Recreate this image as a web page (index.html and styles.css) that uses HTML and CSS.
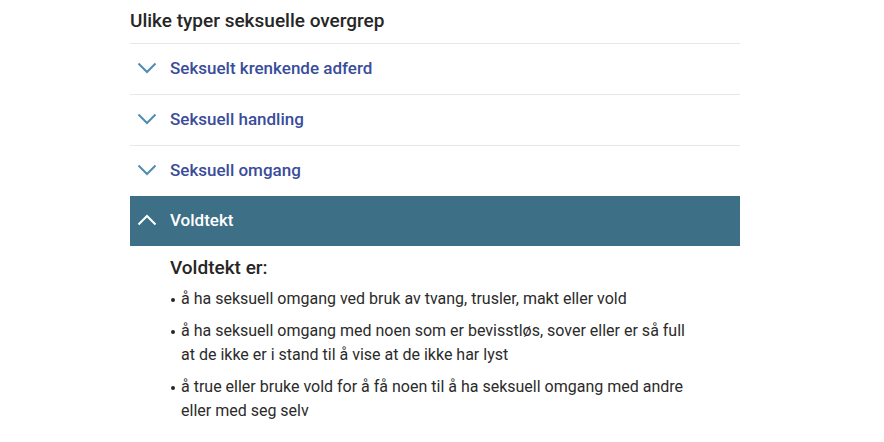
FILE: index.html
```html
<!DOCTYPE html>
<html lang="no">
<head>
  <meta charset="UTF-8" />
  <title>Ulike typer seksuelle overgrep</title>
  <link rel="stylesheet" href="styles.css">
</head>
<body>
  <section class="types">
    <h2>Ulike typer seksuelle overgrep</h2>
    <ul class="accordion">
      <li class="item">
        <button class="toggle">
          <svg class="chevron" viewBox="0 0 20 12" width="20" height="12"><path d="M1.5 1.5 L10 10 L18.5 1.5" /></svg>
          <span>Seksuelt krenkende adferd</span>
        </button>
      </li>
      <li class="item">
        <button class="toggle">
          <svg class="chevron" viewBox="0 0 20 12" width="20" height="12"><path d="M1.5 1.5 L10 10 L18.5 1.5" /></svg>
          <span>Seksuell handling</span>
        </button>
      </li>
      <li class="item">
        <button class="toggle">
          <svg class="chevron" viewBox="0 0 20 12" width="20" height="12"><path d="M1.5 1.5 L10 10 L18.5 1.5" /></svg>
          <span>Seksuell omgang</span>
        </button>
      </li>
      <li class="item open">
        <button class="toggle">
          <svg class="chevron" viewBox="0 0 20 12" width="20" height="12"><path d="M1.5 10.5 L10 2 L18.5 10.5" /></svg>
          <span>Voldtekt</span>
        </button>
        <div class="panel">
          <h3>Voldtekt er:</h3>
          <ul class="bullets">
            <li>å ha seksuell omgang ved bruk av tvang, trusler, makt eller vold</li>
            <li>å ha seksuell omgang med noen som er bevisstløs, sover eller er så full at de ikke er i stand til å vise at de ikke har lyst</li>
            <li>å true eller bruke vold for å få noen til å ha seksuell omgang med andre eller med seg selv</li>
          </ul>
        </div>
      </li>
    </ul>
  </section>
</body>
</html>
```

FILE: styles.css
```css
* {
  margin: 0;
  padding: 0;
  box-sizing: border-box;
}

body {
  font-family: Roboto, "Liberation Sans", sans-serif;
  background: #fff;
  color: #262626;
}

.types {
  width: 610px;
  margin: 0 0 0 130px;
  padding-top: 9px;
}

.types h2 {
  font-size: 19px;
  font-weight: 500;
  line-height: 24px;
  padding-bottom: 10px;
  color: #262626;
}

.accordion {
  list-style: none;
  border-top: 1px solid #e6e6ec;
}

.item + .item {
  border-top: 1px solid #e6e6ec;
}

.toggle {
  display: flex;
  align-items: center;
  gap: 13px;
  width: 100%;
  height: 50px;
  padding: 0 0 3px 7px;
  border: none;
  background: none;
  font-family: inherit;
  font-size: 17px;
  font-weight: 500;
  color: #3a4d9a;
  text-align: left;
  cursor: pointer;
}

.chevron {
  flex: none;
  fill: none;
  stroke: #4f8db0;
  stroke-width: 2;
}

.item.open {
  border-top: none;
}

.item.open .toggle {
  background: #3d6f87;
  color: #fff;
}

.item.open .chevron {
  stroke: #fff;
}

.panel {
  padding: 10px 0 0 40px;
}

.panel h3 {
  font-size: 19px;
  font-weight: 500;
  line-height: 24px;
  margin-bottom: 7px;
}

.bullets {
  list-style: none;
  width: 527px;
  font-size: 16px;
  line-height: 24px;
  color: #2b2b2b;
}

.bullets li {
  position: relative;
  padding-left: 11px;
  margin-bottom: 8px;
}

.bullets li::before {
  content: "";
  position: absolute;
  left: 1px;
  top: 11px;
  width: 4px;
  height: 4px;
  border-radius: 50%;
  background: #262626;
}
```
